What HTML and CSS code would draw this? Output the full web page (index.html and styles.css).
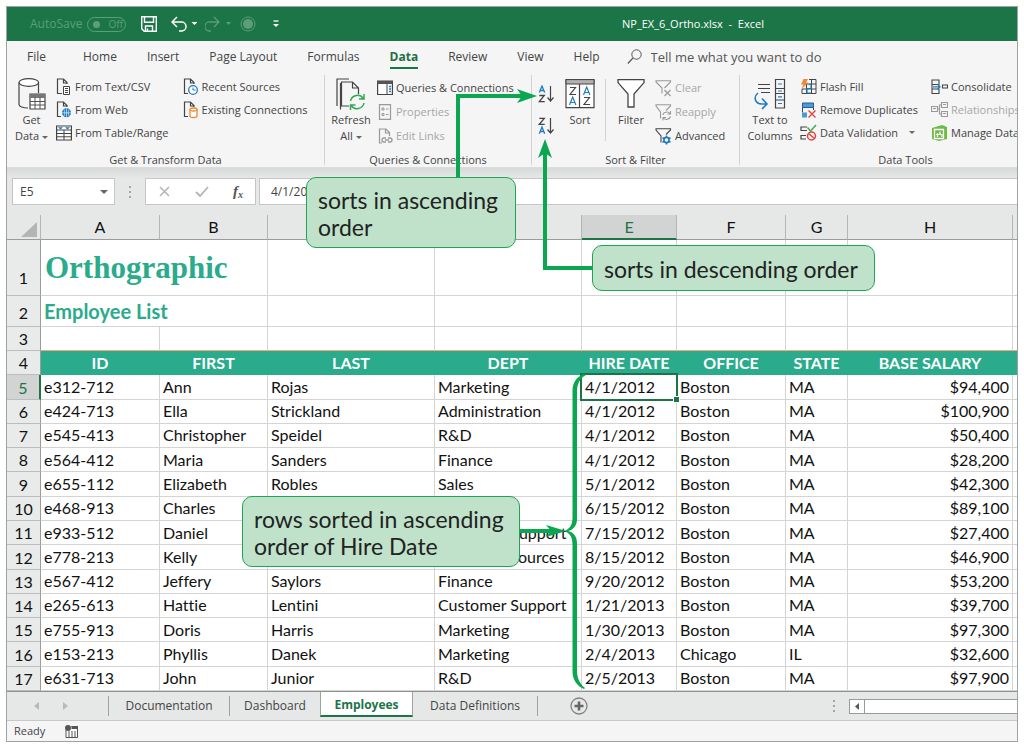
FILE: index.html
```html
<!DOCTYPE html>
<html lang="en">
<head>
<meta charset="utf-8">
<title>NP_EX_6_Ortho.xlsx - Excel</title>
<link rel="stylesheet" href="styles.css">
</head>
<body>
<main class="window">
  <header class="titlebar">
    <div class="quick">
      <label class="autosave">AutoSave
        <input type="checkbox" class="switch-input" disabled>
        <span class="switch"><i></i>Off</span>
      </label>
      <button class="qbtn save" aria-label="Save"><svg width="16" height="16" viewBox="0 0 16 16"><path d="M.7.7h14.6v14.6H3.2L.7 12.8zM3.5.7v5.6h9V.7M4.5 15v-5h7v5M6.5 12.5V15" fill="none" stroke="#fff" stroke-width="1.4"/></svg></button>
      <button class="qbtn" aria-label="Undo"><svg width="26" height="16" viewBox="0 0 26 16"><path d="M6 1 1 6l5 5M1.500 6H10a4.500 4.500 0 0 1 1 9H8" fill="none" stroke="#fff" stroke-width="1.500"/><path d="M20.500 6h6l-3 3z" fill="#fff"/></svg></button>
      <button class="qbtn faded" aria-label="Redo" disabled><svg width="27" height="16" viewBox="0 0 27 16"><path d="M9 1l5 5-5 5M13.500 6H5a4 4 0 0 0-1 9h2" fill="none" stroke="#5b9f78" stroke-width="1.300"/><path d="M21 6h5l-2.500 3z" fill="#5b9f78"/></svg></button>
      <button class="qbtn faded" aria-label="Touch mode" disabled><svg width="16" height="16" viewBox="0 0 16 16"><circle cx="8" cy="8" r="7" fill="none" stroke="#5b9f78"/><circle cx="8" cy="8" r="5" fill="#5b9f78"/></svg></button>
      <button class="qbtn more" aria-label="Customize toolbar"><svg width="6" height="8" viewBox="0 0 6 8"><path d="M.5 1h5" stroke="#fff" stroke-width="1.300"/><path d="M0 4h6L3 7z" fill="#fff"/></svg></button>
    </div>
    <h1 class="doc-name">NP_EX_6_Ortho.xlsx&nbsp; -&nbsp; Excel</h1>
  </header>

  <nav class="tabs">
    <button class="tab file">File</button>
    <button class="tab">Home</button>
    <button class="tab">Insert</button>
    <button class="tab">Page Layout</button>
    <button class="tab">Formulas</button>
    <button class="tab current">Data</button>
    <button class="tab">Review</button>
    <button class="tab">View</button>
    <button class="tab">Help</button>
    <label class="tell"><svg width="16" height="16" viewBox="0 0 16 16"><circle cx="9.500" cy="5.500" r="4.700" fill="none" stroke="#555"/><path d="M6 9 .8 14.500" stroke="#555" stroke-width="1.200"/></svg>
      <input type="text" placeholder="Tell me what you want to do" aria-label="Tell me what you want to do"></label>
  </nav>

  <section class="ribbon">
    <div class="group get">
      <div class="tools">
        <button class="big"><svg width="28" height="32" viewBox="0 0 28 32"><path d="M1 4.500v22c0 2 4 3.500 9 3.500M20.500 4.500V15" fill="none" stroke="#444" stroke-width="1.200"/><ellipse cx="10.800" cy="4.500" rx="9.800" ry="3.800" fill="#fff" stroke="#444" stroke-width="1.200"/><path d="M12 16h15v15H12z" fill="#fff" stroke="#444" stroke-width="1.200"/><path d="M12 16h15v4H12z" fill="#777"/><path d="M12 23.500h15M12 27h15M17 19v12M22 19v12" stroke="#555"/></svg><span>Get<br>Data <i class="caret"></i></span></button>
        <div class="list tight">
          <button><svg width="16" height="18" viewBox="0 0 16 18"><path d="M6 15.500H1.500V1h6L11 4.500V6M7.500 1v4H11" fill="none" stroke="#444" stroke-width="1.200"/><path d="M7.500 8.500h6v8h-6z" fill="#fff" stroke="#444"/><path d="M9 10.500h3M9 12.500h3M9 14.500h3" stroke="#444"/></svg>From Text/CSV</button>
          <button><svg width="16" height="18" viewBox="0 0 16 18"><path d="M5 15.500H1.500V1h6L11 4.500V6M7.500 1v4H11" fill="none" stroke="#444" stroke-width="1.200"/><circle cx="10.500" cy="11.800" r="4.500" fill="#1e7cc0"/><path d="M6 11.800h9M10.500 7.500v9M8 8.500c1 3 1 4 0 6.500M13 8.500c-1 3-1 4 0 6.500" stroke="#d8ebf7" stroke-width=".7" fill="none"/></svg>From Web</button>
          <button><svg width="16" height="18" viewBox="0 0 16 18"><path d="M.6 2h14.800v14H.6z" fill="#fff" stroke="#444" stroke-width="1.200"/><path d="M.6 6h14.800M.6 9.500h14.800M.6 12.800h14.800M8 6v10" stroke="#444"/><path d="M2 3.200h5L4.500 5.500zM9 3.200h5l-2.500 2.300z" fill="#1e7cc0"/></svg>From Table/Range</button>
        </div>
        <div class="list tight">
          <button><svg width="16" height="18" viewBox="0 0 16 18"><path d="M5 15.500H1.500V1h6L11 4.500V6M7.500 1v4H11" fill="none" stroke="#444" stroke-width="1.200"/><circle cx="10" cy="12" r="4.300" fill="#fff" stroke="#1e7cc0" stroke-width="1.300"/><path d="M10 9.500V12h2.500" stroke="#1e7cc0" fill="none"/></svg>Recent Sources</button>
          <button><svg width="16" height="18" viewBox="0 0 16 18"><path d="M5 15.500H1.500V1h6L11 4.500V6M7.500 1v4H11" fill="none" stroke="#444" stroke-width="1.200"/><path d="M7 8.500v6.500c0 2 7 2 7 0V8.500" fill="#fff" stroke="#ec8a35" stroke-width="1.300"/><ellipse cx="10.500" cy="8.500" rx="3.500" ry="1.500" fill="#fff" stroke="#ec8a35" stroke-width="1.300"/></svg>Existing Connections</button>
        </div>
      </div>
      <h2>Get &amp; Transform Data</h2>
    </div>

    <div class="group queries">
      <div class="tools">
        <button class="big"><svg width="30" height="32" viewBox="0 0 30 32"><path d="M1 28V1h12M5 31H4.500V5" fill="none" stroke="#444" stroke-width="1.200"/><path d="M13 28H5.500V4h11l6 6v6M16.500 4v6h6" fill="none" stroke="#444" stroke-width="1.200"/><path d="M14.500 23c1-6 10-8 12.500-2.500M28 16v5h-5M28 25c-1 6-10 8-12.500 2.500M14.500 32v-5h5" fill="none" stroke="#35a852" stroke-width="1.500"/></svg><span>Refresh<br>All <i class="caret"></i></span></button>
        <div class="list">
          <button><svg width="16" height="16" viewBox="0 0 16 16"><path d="M.6 1h14.800v13.500H.6z" fill="#fff" stroke="#444" stroke-width="1.200"/><path d="M.5 1h15v3H.5z" fill="#555"/><path d="M10 4v10" stroke="#444"/><path d="M12 6.500h2M12 9h2M12 11.500h2" stroke="#1e7cc0" stroke-width="1.300"/></svg>Queries &amp; Connections</button>
          <button disabled><svg width="16" height="16" viewBox="0 0 16 16"><path d="M2.500.6h11v14.800h-11z" fill="none" stroke="#999" stroke-width="1.200"/><path d="M5 4h2v2H5zM5 9.500h2v2H5zM9 5h2.500M9 10.500h2.500" fill="none" stroke="#999"/></svg>Properties</button>
          <button disabled><svg width="16" height="16" viewBox="0 0 16 16"><path d="M5 15H2.500V1H9l3.500 3.500V8M8.500 1v4h4" fill="none" stroke="#999" stroke-width="1.200"/><path d="M9 10H7a2 2 0 0 0 0 4h2M11 10h2a2 2 0 0 1 0 4h-2M8 12h4" fill="none" stroke="#999" stroke-width="1.300"/></svg>Edit Links</button>
        </div>
      </div>
      <h2>Queries &amp; Connections</h2>
    </div>

    <div class="group sortfilter">
      <div class="tools">
        <div class="az">
          <button aria-label="Sort A to Z"><svg width="18" height="18" viewBox="0 0 18 18"><path d="M1.300 7.500 4 1l2.700 6.500M2.200 5.500h3.600" fill="none" stroke="#1e7cc0" stroke-width="1.300"/><path d="M1.300 10.500h5L1.300 16.700h5.400" fill="none" stroke="#444" stroke-width="1.300"/><path d="M12.500 1v14.500M9.500 12.500l3 3.500 3-3.500" fill="none" stroke="#444" stroke-width="1.200"/></svg></button>
          <button aria-label="Sort Z to A"><svg width="18" height="18" viewBox="0 0 18 18"><path d="M1.300 1.300h5L1.300 7.300h5.400" fill="none" stroke="#444" stroke-width="1.300"/><path d="M1.300 16.700 4 10l2.700 6.700M2.200 14.500h3.600" fill="none" stroke="#1e7cc0" stroke-width="1.300"/><path d="M12.500 1v14.500M9.500 12.500l3 3.500 3-3.500" fill="none" stroke="#444" stroke-width="1.200"/></svg></button>
        </div>
        <button class="big sort"><svg width="30" height="32" viewBox="0 0 30 32"><path d="M1 1.600h28v28H1z" fill="#fff" stroke="#444" stroke-width="1.200"/><path d="M1 1.600h28v4.400H1z" fill="#b5b1ae" stroke="#444"/><path d="M14.500 6v23.500" stroke="#444" stroke-width="1.200"/><path d="M5 9.500h5.500L5 16.500h6M19 19.500h5.500L19 26.500h6" fill="none" stroke="#444" stroke-width="1.200"/><path d="M4.500 27 7.700 19l3.200 8M5.500 24.500h4.400M18.500 17 21.700 9l3.200 8M19.500 14.500h4.400" fill="none" stroke="#1e7cc0" stroke-width="1.200"/></svg><span>Sort</span></button>
        <div class="rule"></div>
        <button class="big filter"><svg width="28" height="32" viewBox="0 0 28 32"><path d="M1 1.600h26v3L17 16v13h-6V16L1 4.600z" fill="#fff" stroke="#444" stroke-width="1.300"/></svg><span>Filter</span></button>
        <div class="list">
          <button disabled><svg width="17" height="17" viewBox="0 0 17 17"><path d="M7 13.500V8L1 2V.8h14.500V2L9.500 8" fill="none" stroke="#999" stroke-width="1.100"/><path d="m9.500 10 6 6m0-6-6 6" stroke="#999" stroke-width="1.200"/></svg>Clear</button>
          <button disabled><svg width="17" height="17" viewBox="0 0 17 17"><path d="M5.500 14.500V8L1 2V.8h14.500V2L11 6.500" fill="none" stroke="#999" stroke-width="1.100"/><path d="M8 11c0-3 5-4 7-1.500M15.500 7v3h-3M15.500 12.500c-1 3-5 4-7 1.500M8 16.500v-3h3" fill="none" stroke="#999" stroke-width="1.100"/></svg>Reapply</button>
          <button><svg width="17" height="17" viewBox="0 0 17 17"><path d="M6 14.500V8L1 2V.8h14.500V2L11 6.500" fill="none" stroke="#444" stroke-width="1.100"/><circle cx="11.500" cy="12" r="2.600" fill="none" stroke="#1e7cc0" stroke-width="1.600"/><path d="M11.500 7.500v2M11.500 14.500v2M7.500 9.800l1.800 1M13.700 13.200l1.800 1M7.500 14.200l1.800-1M13.700 10.800l1.800-1" stroke="#1e7cc0" stroke-width="1.600"/></svg>Advanced</button>
        </div>
      </div>
      <h2>Sort &amp; Filter</h2>
    </div>

    <div class="group datatools">
      <div class="tools">
        <button class="big"><svg width="32" height="32" viewBox="0 0 32 32"><path d="M4 6.500h12M4 10.500h12M7 14.500h9" stroke="#444" stroke-width="1.200"/><path d="M21.500 1.500h9v28.500h-9zM21.500 10.500h9M21.500 15.500h9M21.500 22h9" fill="none" stroke="#444" stroke-width="1.200"/><path d="M24 6h4M24 13h4M24 18.800h4M24 25.500h4" stroke="#1e7cc0" stroke-width="1.200"/><path d="M4 15c-5 4-3 11 4 11h4M8 20.500l5 5.500-5 5" fill="none" stroke="#1e7cc0" stroke-width="1.600"/></svg><span>Text to<br>Columns</span></button>
        <div class="list tight">
          <button><svg width="17" height="18" viewBox="0 0 17 18"><path d="M9 1.500h7v14H2V11M2 11h14M6.500 6h9.500M11.500 1.500v14M6.500 6v9.500" fill="none" stroke="#444"/><path d="M9 6.500h2v4H7v4.500h4" fill="none" stroke="#1e7cc0" stroke-width="1.200"/><path d="M3.500 1H8L6 4.500h2.500L1.500 11 3.500 6.500H1z" fill="#ec8a35"/></svg>Flash Fill</button>
          <button><svg width="17" height="18" viewBox="0 0 17 18"><path d="M2.500 2h11v4.500h-11z" fill="#4a9bd6" stroke="#285f92"/><path d="M13.500 6.500V9M2.500 6.500v5" stroke="#444"/><path d="M2 11.500h5v5H2z" fill="#4a9bd6"/><path d="m8.500 9.500 7 7m0-7-7 7" stroke="#e04444" stroke-width="1.400"/></svg>Remove Duplicates</button>
          <button><svg width="17" height="18" viewBox="0 0 17 18"><path d="M7 3H1v3.500h6M6 11.500H1V15h5" fill="none" stroke="#444" stroke-width="1.200"/><path d="m7.500 3.500 3 3.500L16 1" fill="none" stroke="#35a852" stroke-width="1.400"/><circle cx="11.500" cy="12" r="4" fill="none" stroke="#e04444" stroke-width="1.500"/><path d="m8.500 9.500 6 5" stroke="#e04444" stroke-width="1.500"/></svg>Data Validation <i class="caret far"></i></button>
        </div>
        <div class="list tight last">
          <button><svg width="17" height="18" viewBox="0 0 17 18"><path d="M1 2h7v4.500H1zM1 11h7v4.500H1zM1 6.500V11M11.500 7h5v3h-5z" fill="none" stroke="#444" stroke-width="1.100"/><path d="M2 8.800h7M6.500 6.300 9 8.800l-2.500 2.500" fill="none" stroke="#1e7cc0" stroke-width="1.300"/></svg>Consolidate</button>
          <button disabled><svg width="17" height="18" viewBox="0 0 17 18"><path d="M.5 5.500h6v5h-6zM10.500 1.500h6v5h-6zM10.500 10.500h6v5h-6zM6.500 8h2V4h2M8.500 8v5h2M2 7.500h3M12 3.500h3M12 12.500h3" fill="none" stroke="#999" stroke-width="1.100"/></svg>Relationships</button>
          <button><svg width="17" height="18" viewBox="0 0 17 18"><path d="M1 4 11 1l5 2v12l-8 2-7-2z" fill="#6dbb45"/><path d="M3.500 5.500h9v9h-9z" fill="none" stroke="#fff" stroke-width="1.300"/><path d="M6.500 13V9M9 11V7.500M11 13v-3M5 10.500h6" stroke="#fff" stroke-width="1.200"/></svg>Manage Data</button>
        </div>
      </div>
      <h2>Data Tools</h2>
    </div>
  </section>

  <section class="formulabar">
    <div class="namebox"><input type="text" value="E5" aria-label="Name box"><button aria-label="Show names"><i class="caret wide"></i></button></div>
    <i class="dots"></i>
    <div class="fx">
      <button aria-label="Cancel"><svg width="11" height="11" viewBox="0 0 11 11"><path d="m1 1 9 9m0-9-9 9" stroke="#b4b4b4" stroke-width="1.500"/></svg></button>
      <button aria-label="Enter"><svg width="14" height="11" viewBox="0 0 14 11"><path d="m1 6 4 4 8-9" fill="none" stroke="#b4b4b4" stroke-width="1.800"/></svg></button>
      <button class="fn" aria-label="Insert function">f<small>x</small></button>
    </div>
    <input class="formula" type="text" value="4/1/2012" aria-label="Formula">
  </section>

  <section class="sheet">
    <table>
      <colgroup><col class="c-n"><col class="c-a"><col class="c-b"><col class="c-c"><col class="c-d"><col class="c-e"><col class="c-f"><col class="c-g"><col class="c-h"><col></colgroup>
      <thead><tr><th class="corner"><svg width="16" height="15" viewBox="0 0 16 15"><path d="M16 0v15H0z" fill="#b3b5b5"/></svg></th><th>A</th><th>B</th><th>C</th><th>D</th><th class="on">E</th><th>F</th><th>G</th><th>H</th><th></th></tr></thead>
      <tbody>
        <tr class="r1"><th>1</th><td colspan="2" class="brand">Orthographic</td><td></td><td></td><td></td><td></td><td></td><td></td><td></td></tr>
        <tr class="r2"><th>2</th><td colspan="2" class="sub">Employee List</td><td></td><td></td><td></td><td></td><td></td><td></td><td></td></tr>
        <tr class="r3"><th>3</th><td></td><td></td><td></td><td></td><td></td><td></td><td></td><td></td><td></td></tr>
        <tr class="head"><th>4</th><td>ID</td><td>FIRST</td><td>LAST</td><td>DEPT</td><td>HIRE DATE</td><td>OFFICE</td><td>STATE</td><td>BASE SALARY</td><td></td></tr>
        <tr class="active"><th>5</th><td>e312-712</td><td>Ann</td><td>Rojas</td><td>Marketing</td><td class="selected">4/1/2012</td><td>Boston</td><td>MA</td><td class="num">$94,400</td><td></td></tr>
        <tr><th>6</th><td>e424-713</td><td>Ella</td><td>Strickland</td><td>Administration</td><td>4/1/2012</td><td>Boston</td><td>MA</td><td class="num">$100,900</td><td></td></tr>
        <tr><th>7</th><td>e545-413</td><td>Christopher</td><td>Speidel</td><td>R&amp;D</td><td>4/1/2012</td><td>Boston</td><td>MA</td><td class="num">$50,400</td><td></td></tr>
        <tr><th>8</th><td>e564-412</td><td>Maria</td><td>Sanders</td><td>Finance</td><td>4/1/2012</td><td>Boston</td><td>MA</td><td class="num">$28,200</td><td></td></tr>
        <tr><th>9</th><td>e655-112</td><td>Elizabeth</td><td>Robles</td><td>Sales</td><td>5/1/2012</td><td>Boston</td><td>MA</td><td class="num">$42,300</td><td></td></tr>
        <tr><th>10</th><td>e468-913</td><td>Charles</td><td></td><td></td><td>6/15/2012</td><td>Boston</td><td>MA</td><td class="num">$89,100</td><td></td></tr>
        <tr><th>11</th><td>e933-512</td><td>Daniel</td><td></td><td>Customer Support</td><td>7/15/2012</td><td>Boston</td><td>MA</td><td class="num">$27,400</td><td></td></tr>
        <tr><th>12</th><td>e778-213</td><td>Kelly</td><td></td><td>Human Resources</td><td>8/15/2012</td><td>Boston</td><td>MA</td><td class="num">$46,900</td><td></td></tr>
        <tr><th>13</th><td>e567-412</td><td>Jeffery</td><td>Saylors</td><td>Finance</td><td>9/20/2012</td><td>Boston</td><td>MA</td><td class="num">$53,200</td><td></td></tr>
        <tr><th>14</th><td>e265-613</td><td>Hattie</td><td>Lentini</td><td>Customer Support</td><td>1/21/2013</td><td>Boston</td><td>MA</td><td class="num">$39,700</td><td></td></tr>
        <tr><th>15</th><td>e755-913</td><td>Doris</td><td>Harris</td><td>Marketing</td><td>1/30/2013</td><td>Boston</td><td>MA</td><td class="num">$97,300</td><td></td></tr>
        <tr><th>16</th><td>e153-213</td><td>Phyllis</td><td>Danek</td><td>Marketing</td><td>2/4/2013</td><td>Chicago</td><td>IL</td><td class="num">$32,600</td><td></td></tr>
        <tr><th>17</th><td>e631-713</td><td>John</td><td>Junior</td><td>R&amp;D</td><td>2/5/2013</td><td>Boston</td><td>MA</td><td class="num">$97,900</td><td></td></tr>
      </tbody>
    </table>
  </section>

  <footer>
    <div class="sheettabs">
      <div class="arrows">
        <button aria-label="Previous sheet"><svg width="5" height="8" viewBox="0 0 5 8"><path d="M5 0v8L0 4z" fill="#b8baba"/></svg></button>
        <button aria-label="Next sheet"><svg width="5" height="8" viewBox="0 0 5 8"><path d="M0 0v8l5-4z" fill="#b8baba"/></svg></button>
      </div>
      <button class="stab s1">Documentation</button>
      <button class="stab s2">Dashboard</button>
      <button class="stab s3 open">Employees</button>
      <button class="stab s4">Data Definitions</button>
      <button class="add" aria-label="New sheet"><svg width="18" height="18" viewBox="0 0 18 18"><circle cx="9" cy="9" r="8" fill="none" stroke="#808282" stroke-width="1.300"/><path d="M9 4.500v9M4.500 9h9" stroke="#666" stroke-width="2.600"/></svg></button>
      <i class="dots push"></i>
      <div class="hscroll"><button aria-label="Scroll left"><svg width="4" height="7" viewBox="0 0 4 7"><path d="M4 0v7L0 3.500z" fill="#555"/></svg></button></div>
    </div>
    <div class="status"><span>Ready</span><svg width="13" height="13" viewBox="0 0 13 13"><path d="M1 5v7.500h11.500v-11H6.500" fill="#fff" stroke="#555"/><path d="M6.500 1H13v3H6.500z" fill="#555"/><circle cx="3" cy="3" r="3" fill="#555"/><path d="M3 7h8M3 9h8M3 11h8" stroke="#555" stroke-dasharray="2 1"/></svg></div>
  </footer>

  <div class="notes">
    <svg class="lines" width="1024" height="748" viewBox="0 0 1024 748">
      <g fill="none" stroke="#0aa650" stroke-width="4"><path d="M458 180V96h66M545 152V268h48M518 531h36"/></g>
      <g fill="#0aa650">
        <path d="M537 96 517 89l5 7-5 7z"/><path d="M545 139l-7 19 7-5 7 5z"/><path d="M566 531 546 525l5 6-5 6z"/>
        <path d="M584 374C576 377 572.500 383 572.500 391V517C572.500 525 570 529 564 531C570 533 572.500 537 572.500 545V671C572.500 680 577 686 584 689L585 688C580 684 577 678 577 671V543C577 536 573 532 568 531C573 530 577 526 577 519V391C577 384 580 378 586 375Z"/>
      </g>
    </svg>
    <p class="callout n1">sorts in ascending<br>order</p>
    <p class="callout n2">sorts in descending order</p>
    <p class="callout n3">rows sorted in ascending<br>order of Hire Date</p>
  </div>
</main>
</body>
</html>
```
FILE: styles.css
```css
* { box-sizing: border-box; }
body { margin: 0; padding: 6px; background: #fff; font: 11px/16px "Open Sans", "Noto Sans", sans-serif; color: #444; }
button, input { font: inherit; color: inherit; border: 0; background: none; padding: 0; margin: 0; }
button { display: flex; align-items: center; white-space: nowrap; }
svg { display: block; flex: none; }
h1, h2, p { margin: 0; font-weight: 400; font-size: inherit; }

.window { height: calc(100vh - 12px); border: 1px solid #a0a3a3; display: grid; grid-template-columns: minmax(0, 1fr); grid-template-rows: auto auto auto auto minmax(0, 1fr) auto; overflow: hidden; background: #e6e8e8; }

.titlebar { height: 34px; background: #1b7547; color: #fff; display: grid; grid-template-columns: 615px 1fr; align-items: center; }
.quick { display: flex; align-items: center; padding-left: 23px; }
.autosave { display: flex; align-items: center; gap: 5px; color: #5b9f78; font-size: 12px; }
.switch-input { position: absolute; opacity: 0; }
.switch { display: flex; align-items: center; gap: 8px; width: 39px; height: 15px; padding-left: 5px; border: 1px solid #5b9f78; border-radius: 8px; font-size: 10px; }
.switch i { width: 7px; height: 7px; border-radius: 50%; background: #5b9f78; }
.save { margin: 0 14px 0 15px; }
.qbtn + .faded { margin-left: 8px; }
.more { margin-left: 17px; }
.doc-name { white-space: pre; }

.tabs { display: flex; height: 32px; background: #f5f5f5; padding-left: 5px; font-size: 12px; }
.tab { padding: 0 15px; position: relative; }
.tab.file { margin-right: 7px; }
.tab.current { font-weight: 700; color: #1f6f45; }
.tab.current::after { content: ""; position: absolute; left: 15px; right: 15px; bottom: 4px; height: 2px; background: #1b7547; }
.tell { display: flex; align-items: center; gap: 8px; margin-left: 12px; flex: 1; font-size: 13px; }
.tell input { flex: 1; }
.tell input::placeholder { color: #555; opacity: 1; }

.ribbon { display: flex; background: #f5f5f5; height: 95px; border-bottom: 1px solid #dcdcdc; overflow: hidden; }
.group { flex: none; display: flex; flex-direction: column; justify-content: space-between; border-right: 1px solid #d2d2d2; margin: 2px 0; }
.group h2 { text-align: center; line-height: 10px; }
.tools { display: flex; align-items: flex-start; }
.big { flex-direction: column; gap: 2px; padding-top: 3px; line-height: 16px; text-align: center; }
.list { display: flex; flex-direction: column; padding-top: 1px; }
.list button { height: 24px; gap: 3px; }
.list.tight { padding-top: 0; }
.list.tight button { height: 23px; gap: 3px; }
button:disabled { color: #a6a6a6; }
.caret { display: inline-block; border: 3px solid transparent; border-top-color: #666; border-bottom: 0; vertical-align: middle; }
.caret.wide { border-width: 4px; border-bottom: 0; }
.caret.far { margin-left: 8px; }
.get { width: 318px; }
.get .list + .list { margin-left: 14px; }
.queries { width: 207px; }
.queries .big { width: 52px; }
.get .big { width: 49px; }
.sortfilter { width: 208px; }
.az { display: flex; flex-direction: column; gap: 14px; padding: 10px 0 0 6px; width: 28px; }
.sort { width: 40px; }
.rule { width: 1px; height: 62px; margin: 4px 5px 0 5px; background: #d2d2d2; }
.filter { width: 40px; margin-right: 4px; }
.datatools { width: 331px; border-right: 0; }
.datatools .big { width: 60px; }
.datatools .last { margin-left: 13px; }

.formulabar { display: flex; align-items: center; padding: 10px 0; height: 47px; background: linear-gradient(#d8dada, #e6e8e8 10px); font-size: 12px; }
.namebox { display: flex; width: 103px; height: 27px; margin-left: 5px; padding: 0 6px 0 7px; background: #fff; border: 1px solid #c6c6c6; }
.namebox input { flex: 1; min-width: 0; }
.dots { width: 2px; height: 12px; margin: 0 14px; background: repeating-linear-gradient(#a4a6a6 0 2px, transparent 2px 5px); }
.fx { display: flex; justify-content: space-between; width: 111px; height: 27px; padding: 0 12px 0 13px; background: #fff; border: 1px solid #c6c6c6; }
.fn { font: italic 700 15px "Liberation Serif", serif; color: #555; }
.fn small { font-size: 10px; padding-top: 5px; }
.formula { flex: 1; height: 27px; margin-left: 3px; padding-left: 11px; background: #fff; border: 1px solid #c6c6c6; border-right: 0; }

.sheet { min-height: 0; overflow: hidden; background: #fff; }
table { width: 100%; height: 100%; table-layout: fixed; border-collapse: separate; border-spacing: 0; font: 16px/20px Lato, sans-serif; font-variant-ligatures: none; color: #111; }
.c-n { width: 34px; } .c-a { width: 119px; } .c-b { width: 108px; } .c-f { width: 109px; } .c-c { width: 167px; } .c-d { width: 147px; } .c-e { width: 95px; } .c-g { width: 62px; } .c-h { width: 165px; }
th, td { padding: 0 3px; border-right: 1px solid #d4d4d4; border-bottom: 1px solid #d4d4d4; text-align: left; white-space: nowrap; font-weight: 400; }
td:last-child { border-right: 0; }
thead th { height: 25px; text-align: center; background: #e6e8e8; border-right-color: #b4b6b6; border-bottom-color: #9a9c9c; }
thead th.on { background: #d2d3d3; color: #1b7547; border-bottom: 2px solid #1b7547; }
thead th:last-child { border-right: 0; }
thead th.corner { padding: 2px 3px; vertical-align: bottom; }
.corner svg { margin-left: auto; }
tbody th { text-align: center; background: #e9ebeb; border-right-color: #9a9c9c; border-bottom-color: #bcbebe; padding: 0; vertical-align: bottom; line-height: 22px; }
.r1 { height: 56px; }
.r1 th { padding-bottom: 6px; }
.r2 { height: 31px; }
.r2 th { padding-bottom: 2px; }
.r3 { height: 24px; }
.r3 td { border-bottom-color: #f0aa78; }
.brand { font: 700 31px/40px "Liberation Serif", serif; color: #2aab8b; padding-left: 4px; }
.sub { font-size: 20px; font-weight: 700; color: #2aab8b; }
.head td { background: #2aab8b; color: #fff; font-weight: 700; text-align: center; border-color: #2aab8b; }
.active th { background: #d2d3d3; color: #1b7547; border-right: 2px solid #1b7547; }
td.num { text-align: right; }
.selected { position: relative; }
.selected::before { content: ""; position: absolute; inset: -2px -2px -2px -2px; border: 2px solid #1b7547; }
.selected::after { content: ""; position: absolute; right: -3px; bottom: -3px; width: 5px; height: 5px; background: #1b7547; outline: 1px solid #fff; }

.sheettabs { display: flex; align-items: center; height: 29px; border-top: 1px solid #8f9191; font-size: 12px; }
.arrows { display: flex; gap: 24px; width: 101px; padding-left: 27px; }
.stab { height: 20px; border-right: 1px solid #a0a2a2; justify-content: center; }
.s1 { width: 122px; border-left: 1px solid #a0a2a2; }
.s2 { width: 90px; border-right: 0; }
.s3 { width: 93px; }
.s4 { width: 125px; }
.open { align-self: flex-start; height: 25px; background: #fff; border: 1px solid #a0a2a2; border-width: 0 1px 2px; border-bottom-color: #1b7547; color: #1b7547; font-weight: 700; padding-top: 3px; }
.add { margin-left: 32px; }
.push { margin: 0 14px 0 auto; }
.hscroll { width: 168px; height: 15px; background: #fff; border: 1px solid #999b9b; border-right: 0; }
.hscroll button { width: 15px; height: 13px; justify-content: center; border-right: 1px solid #999b9b; }
.status { display: flex; align-items: center; gap: 20px; height: 21px; padding-left: 7px; background: #f5f5f5; border-top: 1px solid #c8c8c8; }

.lines { position: absolute; top: 0; left: 0; }
.callout { position: absolute; border: 1px solid #1fa655; border-radius: 10px; background: #c0e2ca; color: #222; font: 23px/27px Lato, sans-serif; white-space: nowrap; }
.n1 { left: 306px; top: 177px; padding: 9px 17px 6px 11px; }
.n2 { left: 592px; top: 245px; padding: 10px 16px 7px 11px; }
.n3 { left: 242px; top: 496px; padding: 9px 15px 6px 11px; }
```
